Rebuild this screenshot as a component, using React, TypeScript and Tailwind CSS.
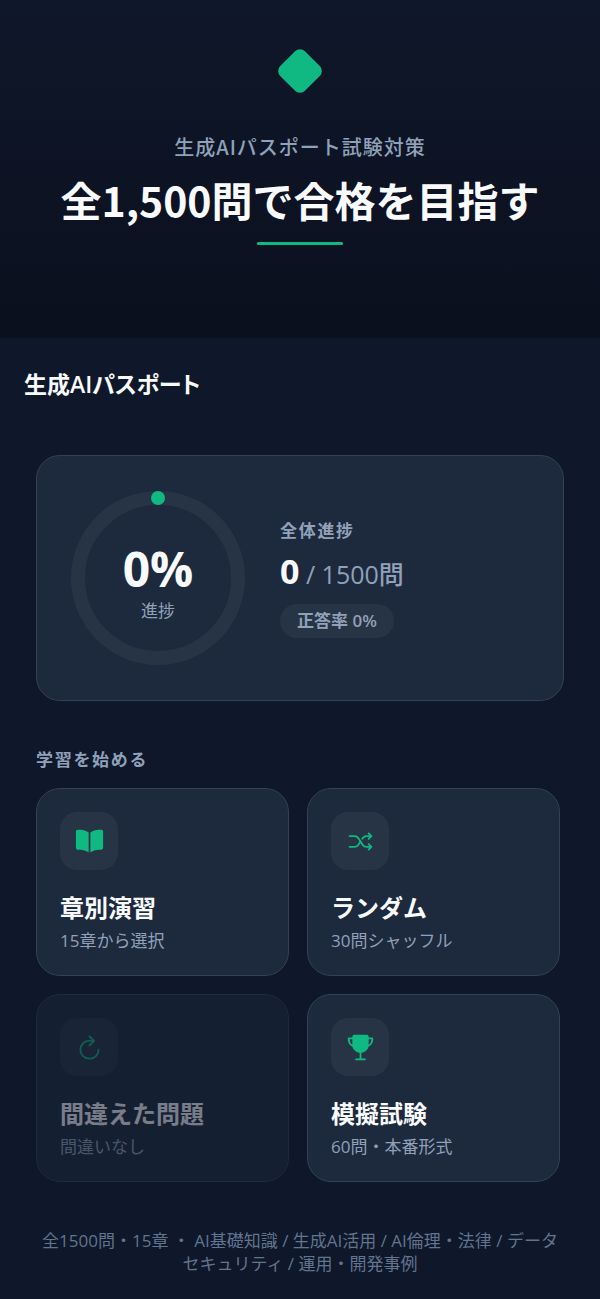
import React from "react";
import { IoBook, IoShuffleOutline, IoRefreshOutline, IoTrophy } from "react-icons/io5";
import type { IconType } from "react-icons";

interface StudyMode {
  title: string;
  description: string;
  icon: IconType;
  disabled?: boolean;
}

const studyModes: StudyMode[] = [
  { title: "章別演習", description: "15章から選択", icon: IoBook },
  { title: "ランダム", description: "30問シャッフル", icon: IoShuffleOutline },
  { title: "間違えた問題", description: "間違いなし", icon: IoRefreshOutline, disabled: true },
  { title: "模擬試験", description: "60問・本番形式", icon: IoTrophy },
];

const Hero = () => (
  <section className="flex flex-col items-center bg-linear-to-b from-[#0f172a] to-[#0b101e] px-6 pt-12 pb-[93px] text-center font-['Noto_Sans_CJK_JP',sans-serif]">
    <svg className="h-[46px] w-[46px]" viewBox="0 0 46 46" aria-hidden="true">
      <rect x="5.5" y="5.5" width="35" height="35" rx="7" fill="#10b981" transform="rotate(45 23 23)" />
    </svg>
    <p className="mt-[37px] text-xl leading-8 font-medium tracking-wider text-slate-400">
      生成AIパスポート試験対策
    </p>
    <h1 className="mt-1.5 text-[41px] leading-[60px] font-semibold text-slate-50">
      全1,500問で合格を目指す
    </h1>
    <div className="mt-[13px] h-[3px] w-[86px] rounded-full bg-[#10b981]" />
  </section>
);

const ProgressRing = ({ percent }: { percent: number }) => {
  const radius = 80;
  const length = 2 * Math.PI * radius;

  return (
    <div className="relative h-[174px] w-[174px] shrink-0">
      <svg className="h-full w-full -rotate-90" viewBox="0 0 174 174" fill="none" aria-hidden="true">
        <circle cx="87" cy="87" r={radius} stroke="#273445" strokeWidth="14" />
        <circle
          cx="87"
          cy="87"
          r={radius}
          stroke="#10b981"
          strokeWidth="14"
          strokeLinecap="round"
          strokeDasharray={`${Math.max((percent / 100) * length, 0.01)} ${length}`}
        />
      </svg>
      <div className="absolute inset-0 flex flex-col items-center justify-center pt-2.5">
        <span className="text-5xl leading-[52px] font-bold text-slate-50">{percent}%</span>
        <span className="mt-1 text-[17px] leading-6 text-slate-400">進捗</span>
      </div>
    </div>
  );
};

const ProgressCard = () => (
  <section className="flex items-center gap-[35px] rounded-3xl border border-[#334155] bg-slate-800 px-[34px] py-[35px]">
    <ProgressRing percent={0} />
    <div className="flex flex-col items-start">
      <h3 className="text-[17px] leading-6 font-semibold tracking-widest text-slate-400">全体進捗</h3>
      <p className="mt-1.5 text-[25px] leading-[44px] font-medium text-slate-400">
        <span className="text-[34px] font-bold text-slate-50">0</span> / 1500問
      </p>
      <span className="mt-2 rounded-full bg-[#273445] px-[17px] py-[5px] text-[17px] leading-6 font-semibold text-slate-400">
        正答率 0%
      </span>
    </div>
  </section>
);

const ModeCard = ({ title, description, icon: Icon, disabled }: StudyMode) => (
  <button
    type="button"
    disabled={disabled}
    className="flex flex-col items-start rounded-3xl border border-[#334155] bg-slate-800 px-[23px] pt-[23px] pb-[22px] text-left disabled:opacity-45"
  >
    <span className="flex h-[58px] w-[58px] items-center justify-center rounded-[17px] bg-[#273445]">
      <Icon className="h-[29px] w-[29px] text-[#10b981]" />
    </span>
    <span className="mt-5 text-2xl leading-9 font-bold text-slate-50">{title}</span>
    <span className="mt-[3px] text-[17px] leading-6 text-slate-400">{description}</span>
  </button>
);

const App = () => {
  return (
    <div className="min-h-screen bg-[#0f172a] font-['Open_Sans','Noto_Sans_CJK_JP',sans-serif]" lang="ja">
      <Hero />

      <header className="px-6 pt-7">
        <h2 className="text-[23px] leading-9 font-semibold text-slate-50 [font-feature-settings:'palt']">
          生成AIパスポート
        </h2>
      </header>

      <main className="px-9 pt-[53px]">
        <ProgressCard />

        <h3 className="mt-[47px] text-[17px] leading-6 font-semibold tracking-widest text-slate-400">
          学習を始める
        </h3>
        <div className="mt-4 grid grid-cols-2 gap-[18px] pr-1">
          {studyModes.map((mode) => (
            <ModeCard key={mode.title} {...mode} />
          ))}
        </div>
      </main>

      <footer className="px-9 pt-[47px] pb-[23px] text-center text-[17px] leading-[23px] text-slate-500">
        全1500問・15章 ・ AI基礎知識 / 生成AI活用 / AI倫理・法律 / データセキュリティ / 運用・開発事例
      </footer>
    </div>
  );
};

export default App;
